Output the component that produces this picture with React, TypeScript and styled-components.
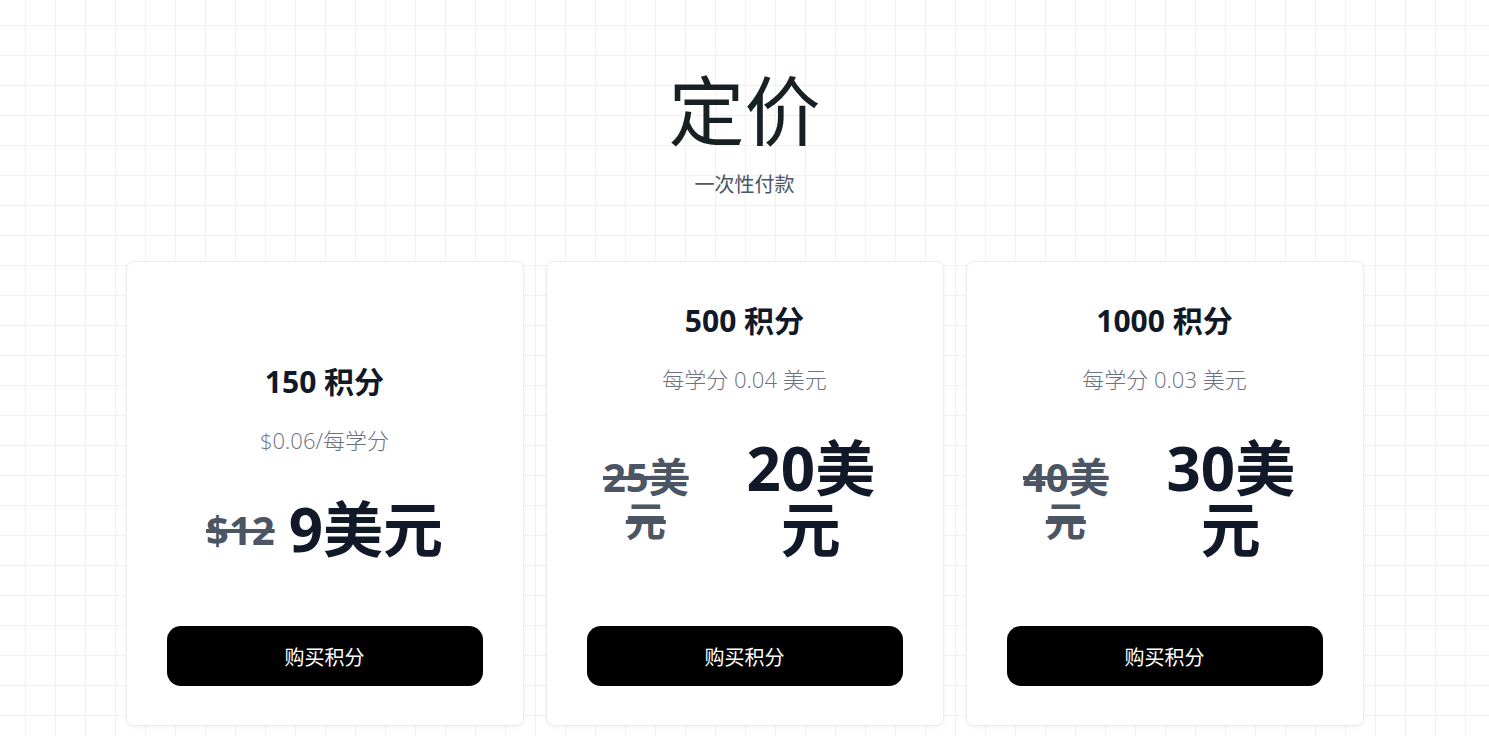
import React from "react";
import styled, { createGlobalStyle } from "styled-components";

const GlobalStyle = createGlobalStyle`
  html, body { margin: 0; padding: 0; }
  body {
    font-family: "Open Sans", "Noto Sans CJK SC", sans-serif;
    background-color: #ffffff;
    background-image:
      linear-gradient(to right, #f1f1f1 1px, transparent 1px),
      linear-gradient(to bottom, #f1f1f1 1px, transparent 1px);
    background-size: 30px 30px;
    background-position: 25px 25px;
    min-height: 100vh;
  }
`;

const Page = styled.main`
  display: flex;
  flex-direction: column;
  align-items: center;
  padding-top: 73px;
`;

const Title = styled.h1`
  margin: 0;
  font-size: 76px;
  line-height: 1;
  font-weight: 400;
  color: #172022;
`;

const Lead = styled.p`
  margin: 22px 0 0;
  font-size: 20px;
  line-height: 28px;
  color: #4b5563;
`;

const Cards = styled.section`
  display: grid;
  grid-template-columns: repeat(3, 1fr);
  gap: 22px;
  width: 1238px;
  margin-top: 62px;
`;

const Card = styled.article`
  box-sizing: border-box;
  padding: 39px 40px;
  background: #ffffff;
  border: 1px solid #ededed;
  border-radius: 8px;
  box-shadow: 0 1px 4px rgba(0, 0, 0, 0.06);
  display: flex;
  flex-direction: column;
  justify-content: flex-end;
  text-align: center;
`;

const Plan = styled.h3`
  margin: 0;
  font-size: 30px;
  line-height: 40px;
  font-weight: 700;
  color: #111827;
`;

const Rate = styled.p`
  margin: 23px 0 0;
  font-size: 22px;
  line-height: 30px;
  font-weight: 300;
  color: #6b7280;
`;

const PriceRow = styled.div`
  display: flex;
  justify-content: center;
  align-items: center;
  gap: 14px;
  margin-top: 44px;
`;

const OldPrice = styled.span`
  flex-shrink: 2;
  font-size: 40px;
  line-height: 44px;
  font-weight: 700;
  color: #4b5563;
  text-decoration: line-through;
`;

const NewPrice = styled.span`
  font-size: 60px;
  line-height: 61px;
  font-weight: 700;
  color: #111827;
`;

const BuyButton = styled.button`
  margin-top: 66px;
  height: 60px;
  width: 100%;
  border: none;
  border-radius: 14px;
  background: #000000;
  color: #ffffff;
  font-family: inherit;
  font-size: 20px;
  cursor: pointer;
`;

const plans = [
  { name: "150 积分", rate: "$0.06/每学分", old: "$12", price: "9美元" },
  { name: "500 积分", rate: "每学分 0.04 美元", old: "25美元", price: "20美元" },
  { name: "1000 积分", rate: "每学分 0.03 美元", old: "40美元", price: "30美元" },
];

export default function App() {
  return (
    <>
      <GlobalStyle />
      <Page>
        <Title>定价</Title>
        <Lead>一次性付款</Lead>
        <Cards>
          {plans.map((p) => (
            <Card key={p.name}>
              <Plan>{p.name}</Plan>
              <Rate>{p.rate}</Rate>
              <PriceRow>
                <OldPrice>{p.old}</OldPrice>
                <NewPrice>{p.price}</NewPrice>
              </PriceRow>
              <BuyButton>购买积分</BuyButton>
            </Card>
          ))}
        </Cards>
      </Page>
    </>
  );
}
